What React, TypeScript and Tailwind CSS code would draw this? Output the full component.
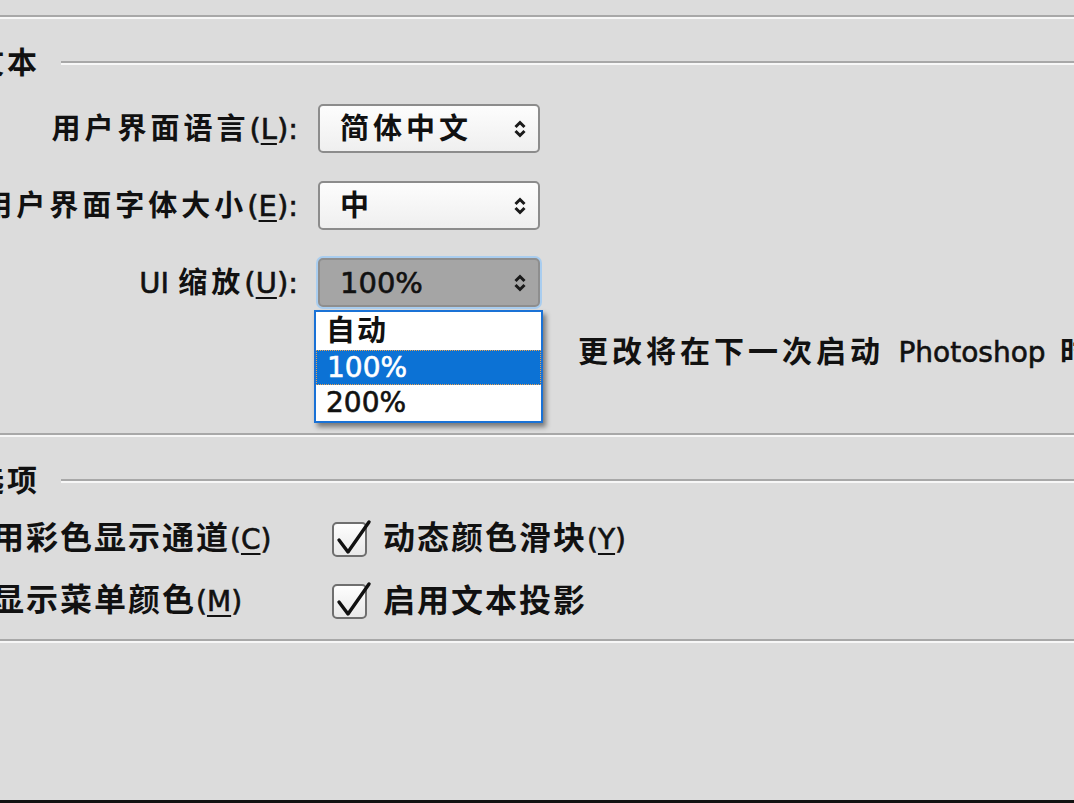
import React from "react";

const font = "font-['DejaVu_Sans','Noto_Sans_CJK_SC',sans-serif]";

// two-tone etched line, like the old dialog separators
function Rule({ className = "" }: { className?: string }) {
    return <div className={`h-[4px] border-t-2 border-[#a8a8a8] bg-[#f7f7f7] ${className}`} />;
}

// latin bits keep normal spacing, slightly thickened to sit with the cjk glyphs
function Lat({ children, u, className = "" }: { children?: React.ReactNode; u?: string; className?: string }) {
    return (
        <span className={`tracking-normal font-normal [-webkit-text-stroke:0.6px_currentColor] ${className}`}>
            {u ? (
                <>
                    (<span className="underline underline-offset-4">{u}</span>)
                </>
            ) : (
                children
            )}
        </span>
    );
}

function Arrows() {
    return (
        <svg width="16" height="20" viewBox="0 0 16 20">
            <path d="M3.5 8 L8 3.5 L12.5 8" fill="none" stroke="#1a1a1a" strokeWidth="3" />
            <path d="M3.5 12 L8 16.5 L12.5 12" fill="none" stroke="#1a1a1a" strokeWidth="3" />
        </svg>
    );
}

function Select({ value, active = false }: { value: React.ReactNode; active?: boolean }) {
    return (
        <div
            className={`flex items-center w-[222px] h-[49px] rounded-[5px] border-2 pl-[20px] pr-[10px] ${
                active
                    ? "bg-[#a5a5a5] border-[#8e8e8e] ring-2 ring-[#a9cdef]"
                    : "bg-gradient-to-b from-[#fdfdfd] to-[#efefef] border-[#8c8c8c]"
            }`}
        >
            <span className="flex-1 text-[29px] leading-[36px] tracking-[4px] font-semibold">{value}</span>
            <Arrows />
        </div>
    );
}

function Check() {
    return (
        <div className="relative w-[35px] h-[35px] rounded-[5px] border-2 border-[#6f6f6f] bg-gradient-to-b from-[#fefefe] to-[#e9e9e9] shrink-0">
            <svg width="44" height="40" viewBox="0 0 44 40" className="absolute left-[-2px] top-[-4px] overflow-visible">
                <path d="M7 20 L16 32 L37 2" fill="none" stroke="#111" strokeWidth="3.4" strokeLinecap="round" strokeLinejoin="round" />
            </svg>
        </div>
    );
}

function Heading({ text }: { text: string }) {
    return (
        <div className="flex items-center h-[36px]">
            <span className="ml-[-26px] text-[30px] leading-[36px] tracking-[3px] font-semibold whitespace-nowrap">{text}</span>
            <Rule className="flex-1 ml-[21px]" />
        </div>
    );
}

const label = "w-[298px] text-right text-[29px] leading-[36px] tracking-[4px] font-semibold whitespace-nowrap";
const opt = "text-[32px] leading-[40px] tracking-[2px] font-semibold whitespace-nowrap";
const optLat = "text-[28px]";

export default function App() {
    return (
        <div className={`relative w-[1074px] h-[803px] overflow-hidden bg-[#dcdcdc] text-[#111] flex flex-col ${font}`}>
            <div className="h-[15px]" />
            <Rule />

            <div className="mt-[26px]">
                <Heading text="文本" />
            </div>

            <div className="mt-[23px] flex flex-col gap-[28px]">
                <div className="flex items-center">
                    <span className={label}>
                        用户界面语言<Lat u="L" />
                        <Lat>:</Lat>
                    </span>
                    <div className="ml-[20px]">
                        <Select value="简体中文" />
                    </div>
                </div>
                <div className="flex items-center">
                    <span className={`${label} flex justify-end`}>
                        用户界面字体大小<Lat u="E" />
                        <Lat>:</Lat>
                    </span>
                    <div className="ml-[20px]">
                        <Select value="中" />
                    </div>
                </div>
                <div className="flex items-center">
                    <span className={label}>
                        <Lat>UI </Lat>缩放<Lat u="U" />
                        <Lat>:</Lat>
                    </span>
                    <div className="relative ml-[20px]">
                        <Select value={<Lat>100%</Lat>} active />
                        {/* open dropdown list */}
                        <div className="absolute left-[-4px] top-[52px] w-[229px] border-2 border-[#1a72d6] bg-white shadow-[3px_4px_5px_rgba(0,0,0,0.45)] z-10">
                            <div className="h-[38px] pl-[10px] text-[29px] leading-[38px] tracking-[2px] font-semibold">自动</div>
                            <div className="h-[35px] pl-[10px] text-[28px] leading-[33px] bg-[#0c72d5] text-white border border-dotted border-[#e6a254]">
                                <Lat>100%</Lat>
                            </div>
                            <div className="h-[36px] pl-[10px] text-[28px] leading-[36px]">
                                <Lat>200%</Lat>
                            </div>
                        </div>
                    </div>
                </div>
            </div>

            <div className="mt-[27px] ml-[578px] text-[30px] leading-[36px] tracking-[4px] font-semibold whitespace-nowrap">
                更改将在下一次启动 <Lat className="text-[28px]">Photoshop</Lat> 时生效。
            </div>

            <Rule className="mt-[62px]" />

            <div className="mt-[26px]">
                <Heading text="选项" />
            </div>

            <div className="mt-[20px] flex flex-col gap-[22px]">
                <div className="flex items-center h-[40px]">
                    <span className={`ml-[-8px] w-[340px] ${opt}`}>
                        用彩色显示通道<Lat u="C" className={optLat} />
                    </span>
                    <Check />
                    <span className={`ml-[16px] ${opt}`}>
                        动态颜色滑块<Lat u="Y" className={optLat} />
                    </span>
                </div>
                <div className="flex items-center h-[40px]">
                    <span className={`ml-[-8px] w-[340px] ${opt}`}>
                        显示菜单颜色<Lat u="M" className={optLat} />
                    </span>
                    <Check />
                    <span className={`ml-[16px] ${opt}`}>启用文本投影</span>
                </div>
            </div>

            <Rule className="mt-[18px]" />

            <div className="flex-1" />
            <div className="h-[3px] bg-[#111]" />
        </div>
    );
}
